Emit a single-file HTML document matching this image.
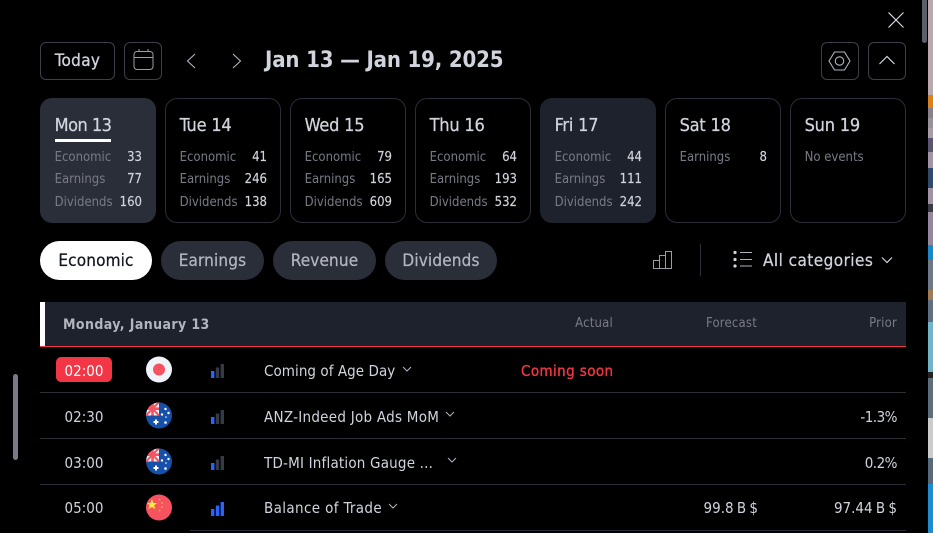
<!DOCTYPE html>
<html><head><meta charset="utf-8">
<style>
html,body{margin:0;padding:0;background:#000;width:933px;height:533px;overflow:hidden}
body{position:relative;font-family:"DejaVu Sans Condensed","Liberation Sans",sans-serif;font-stretch:condensed}
.a{position:absolute;white-space:nowrap}
.btn{position:absolute;top:42px;height:36px;border:1px solid #3d404a;border-radius:6px}
.card{position:absolute;top:98px;width:114px;height:123px;border:1px solid #2a2e39;border-radius:12px}
.card .t{position:absolute;left:13.6px;top:16px;font-size:18px;line-height:22px;color:#d1d4dc;white-space:nowrap;letter-spacing:-.2px;-webkit-text-stroke:.25px #d1d4dc}
.card .l{position:absolute;left:13.6px;margin-top:1px;font-size:13px;line-height:16px;color:#787b86;white-space:nowrap}
.card .n{position:absolute;right:13px;margin-top:1px;font-size:13px;line-height:16px;color:#d1d4dc;white-space:nowrap;-webkit-text-stroke:.15px #d1d4dc}
.pill{position:absolute;top:241px;height:39px;border-radius:20px;background:#2a2e39;color:#b2b5be;font-size:17px;line-height:40px;text-align:center;letter-spacing:.15px;-webkit-text-stroke:.25px currentColor}
.sep{position:absolute;height:1px;background:#2a2e39;left:40px;width:866px}
.time{position:absolute;left:56px;width:56px;text-align:center;font-size:15px;line-height:20px;color:#d1d4dc}
.ev{position:absolute;left:264px;font-size:15px;line-height:20px;color:#d1d4dc;white-space:nowrap}
.val{position:absolute;font-size:15px;line-height:20px;color:#d1d4dc;white-space:nowrap;text-align:right;letter-spacing:-.5px}
.h{position:absolute;top:316px;font-size:13px;line-height:16px;color:#787b86;text-align:right;white-space:nowrap;letter-spacing:.2px}
svg{position:absolute;display:block}
.s{position:absolute;left:928px;width:5px}
</style></head>
<body>
<!-- right wallpaper strip -->
<div class="s" style="top:0;height:95px;background:#b9a8ae"></div>
<div class="s" style="top:95px;height:13px;background:#d9801f"></div>
<div class="s" style="top:108px;height:10px;background:#8a7f8c"></div>
<div class="s" style="top:118px;height:10px;background:#9a9098"></div>
<div class="s" style="top:128px;height:10px;background:#a89ca8"></div>
<div class="s" style="top:138px;height:14px;background:#5a5470"></div>
<div class="s" style="top:152px;height:16px;background:#a294a4"></div>
<div class="s" style="top:168px;height:20px;background:#2f4a6a"></div>
<div class="s" style="top:188px;height:16px;background:#a094a4"></div>
<div class="s" style="top:204px;height:8px;background:#3a3a44"></div>
<div class="s" style="top:212px;height:33px;background:#96889c"></div>
<div class="s" style="top:245px;height:15px;background:#1c88c8"></div>
<div class="s" style="top:260px;height:30px;background:#6f7886"></div>
<div class="s" style="top:290px;height:10px;background:#a07a50"></div>
<div class="s" style="top:300px;height:22px;background:#5f6e80"></div>
<div class="s" style="top:322px;height:50px;background:#6fb4c8"></div>
<div class="s" style="top:372px;height:6px;background:#222"></div>
<div class="s" style="top:378px;height:40px;background:#5f6d7a"></div>
<div class="s" style="top:418px;height:40px;background:#c9cbcd"></div>
<div class="s" style="top:458px;height:26px;background:#58697a"></div>
<div class="s" style="top:484px;height:49px;background:#1f8cd0"></div>

<!-- scrollbars -->
<div class="a" style="left:922px;top:-4px;width:5px;height:47px;background:#5d5f68;border-radius:3px"></div>
<div class="a" style="left:13px;top:374px;width:5px;height:86px;background:#787b86;border-radius:3px"></div>

<!-- close -->
<svg style="left:887px;top:11px" width="18" height="18" viewBox="0 0 18 18"><path d="M1.5 1.5L16.5 16.5M16.5 1.5L1.5 16.5" stroke="#d1d4dc" stroke-width="1.2" fill="none"/></svg>

<!-- top bar -->
<div class="btn" style="left:40px;width:73px;color:#d1d4dc;font-size:17px;line-height:36px;text-align:center;letter-spacing:.3px;-webkit-text-stroke:.3px #d1d4dc">Today</div>
<div class="btn" style="left:124px;width:36px"></div>
<svg style="left:133px;top:48px" width="22" height="24" viewBox="0 0 22 24" fill="none" stroke="#9a9da6" stroke-width="1"><rect x="1" y="3.5" width="19" height="18" rx="3"/><path d="M1 9.5H20M6 1V3.5M15 1V3.5"/></svg>
<svg style="left:185px;top:52px" width="12" height="18" viewBox="0 0 12 18" fill="none" stroke="#b2b5be" stroke-width="1.1"><path d="M10 2L2.5 9L10 16"/></svg>
<svg style="left:231px;top:52px" width="12" height="18" viewBox="0 0 12 18" fill="none" stroke="#b2b5be" stroke-width="1.1"><path d="M2 2L9.5 9L2 16"/></svg>
<div class="a" style="left:265px;top:47px;font-size:22px;line-height:28px;font-weight:bold;color:#d1d4dc;letter-spacing:-.15px">Jan 13 — Jan 19, 2025</div>
<div class="btn" style="left:821px;width:36px"></div>
<svg style="left:827px;top:49px" width="25" height="24" viewBox="0 0 25 24" fill="none" stroke="#b2b5be" stroke-width="1.1"><path d="M7.5 3H17.5L23 12L17.5 21H7.5L2 12Z"/><circle cx="12.5" cy="12" r="4.2"/></svg>
<div class="btn" style="left:868px;width:36px"></div>
<svg style="left:878px;top:53px" width="18" height="14" viewBox="0 0 18 14" fill="none" stroke="#d1d4dc" stroke-width="1.2"><path d="M1.5 11L9 3.5L16.5 11"/></svg>

<!-- cards -->
<div class="card" style="left:40px;background:#2a2e39;border-color:#2a2e39"><div class="t" style="letter-spacing:-.5px">Mon 13</div>
<div class="a" style="left:14px;top:40px;width:56px;height:3px;background:#fff"></div>
<div class="l" style="top:50px">Economic</div><div class="n" style="top:50px">33</div>
<div class="l" style="top:72px">Earnings</div><div class="n" style="top:72px">77</div>
<div class="l" style="top:95px">Dividends</div><div class="n" style="top:95px">160</div></div>

<div class="card" style="left:165px"><div class="t">Tue 14</div>
<div class="l" style="top:50px">Economic</div><div class="n" style="top:50px">41</div>
<div class="l" style="top:72px">Earnings</div><div class="n" style="top:72px">246</div>
<div class="l" style="top:95px">Dividends</div><div class="n" style="top:95px">138</div></div>

<div class="card" style="left:290px"><div class="t">Wed 15</div>
<div class="l" style="top:50px">Economic</div><div class="n" style="top:50px">79</div>
<div class="l" style="top:72px">Earnings</div><div class="n" style="top:72px">165</div>
<div class="l" style="top:95px">Dividends</div><div class="n" style="top:95px">609</div></div>

<div class="card" style="left:415px"><div class="t">Thu 16</div>
<div class="l" style="top:50px">Economic</div><div class="n" style="top:50px">64</div>
<div class="l" style="top:72px">Earnings</div><div class="n" style="top:72px">193</div>
<div class="l" style="top:95px">Dividends</div><div class="n" style="top:95px">532</div></div>

<div class="card" style="left:540px;background:#1e222d;border-color:#1e222d"><div class="t">Fri 17</div>
<div class="l" style="top:50px">Economic</div><div class="n" style="top:50px">44</div>
<div class="l" style="top:72px">Earnings</div><div class="n" style="top:72px">111</div>
<div class="l" style="top:95px">Dividends</div><div class="n" style="top:95px">242</div></div>

<div class="card" style="left:665px"><div class="t">Sat 18</div>
<div class="l" style="top:50px">Earnings</div><div class="n" style="top:50px">8</div></div>

<div class="card" style="left:790px"><div class="t">Sun 19</div>
<div class="l" style="top:50px">No events</div></div>

<!-- pills -->
<div class="pill" style="left:40px;width:112px;background:#fff;color:#131722">Economic</div>
<div class="pill" style="left:161px;width:103px">Earnings</div>
<div class="pill" style="left:273px;width:103px">Revenue</div>
<div class="pill" style="left:385px;width:112px">Dividends</div>

<svg style="left:652px;top:250px" width="21" height="20" viewBox="0 0 21 20" fill="none" stroke="#9a9da6" stroke-width="1"><path d="M1.5 18.5V10.5H7.5V18.5ZM7.5 18.5V5.5H13.5V18.5ZM13.5 18.5V1.5H19.5V18.5Z"/></svg>
<div class="a" style="left:700px;top:244px;width:1px;height:32px;background:#2f323b"></div>
<svg style="left:733px;top:250px" width="20" height="20" viewBox="0 0 20 20"><circle cx="2" cy="2.5" r="1.6" fill="#d1d4dc"/><circle cx="2" cy="9.5" r="1.6" fill="#d1d4dc"/><circle cx="2" cy="16" r="1.6" fill="#d1d4dc"/><path d="M7 2.5H19M7 9.5H19M7 16H19" stroke="#b2b5be" stroke-width="1.1"/></svg>
<div class="a" style="left:763px;top:250px;font-size:17px;line-height:22px;color:#d1d4dc;letter-spacing:.45px;-webkit-text-stroke:.25px #d1d4dc">All categories</div>
<svg style="left:881px;top:256px" width="12" height="8" viewBox="0 0 12 8" fill="none" stroke="#d1d4dc" stroke-width="1.2"><path d="M1 1.5L6 6.5L11 1.5"/></svg>

<!-- table header -->
<div class="a" style="left:40px;top:302px;width:866px;height:44px;background:#1e222d"></div>
<div class="a" style="left:40px;top:302px;width:5px;height:44px;background:#fff"></div>
<div class="a" style="left:40px;top:346px;width:866px;height:1px;background:#f23645"></div>
<div class="a" style="left:63px;top:316px;font-size:14px;line-height:18px;font-weight:bold;color:#b2b5be;letter-spacing:.4px">Monday, January 13</div>
<div class="h" style="right:320px">Actual</div>
<div class="h" style="right:176px">Forecast</div>
<div class="h" style="right:36px">Prior</div>

<!-- separators -->
<div class="sep" style="top:392px"></div>
<div class="sep" style="top:438px"></div>
<div class="sep" style="top:484px"></div>
<div class="sep" style="top:530px;left:190px;width:716px"></div>

<!-- row 1 -->
<div class="a" style="left:56px;top:357px;width:56px;height:25px;background:#f23645;border-radius:5px"></div>
<div class="time" style="top:361px;color:#fff">02:00</div>
<svg style="left:146px;top:356px" width="26" height="27" viewBox="0 0 26 27"><circle cx="13" cy="13.5" r="13" fill="#f0f3fa"/><circle cx="13" cy="13.5" r="6" fill="#f7525f"/></svg>
<svg style="left:211px;top:364px" width="13" height="14" viewBox="0 0 13 14"><rect x="0" y="7" width="3.4" height="7" fill="#2962ff"/><rect x="4.8" y="3.5" width="3.4" height="10.5" fill="#363a45"/><rect x="9.6" y="0" width="3.4" height="14" fill="#363a45"/></svg>
<div class="ev" style="top:361px;letter-spacing:.06px">Coming of Age Day</div>
<svg style="left:402px;top:366px" width="10" height="7" viewBox="0 0 10 7" fill="none" stroke="#b2b5be"><path d="M1 1L5 5L9 1"/></svg>
<div class="a" style="left:521px;top:361px;font-size:15px;line-height:20px;color:#f23645;letter-spacing:.4px;-webkit-text-stroke:.35px #f23645">Coming soon</div>

<!-- row 2 -->
<div class="time" style="top:407px">02:30</div>
<svg style="left:146px;top:402px" width="26" height="27" viewBox="0 0 26 27"><defs><clipPath id="c"><circle cx="13" cy="13.5" r="13"/></clipPath></defs><g clip-path="url(#c)"><rect width="26" height="27" fill="#1650a8"/><rect width="13" height="13.5" fill="#f0f3fa"/><path d="M0 0L13 13.5M13 0L0 13.5" stroke="#f7525f" stroke-width="2"/><path d="M6.5 0V13.5M0 6.7H13" stroke="#f7525f" stroke-width="2.6"/><path d="M7.5 20h5M10 17.5v5" stroke="#fff" stroke-width="2"/><g fill="#fff"><circle cx="19.5" cy="7" r="1.2"/><circle cx="22.5" cy="11" r="1.2"/><circle cx="16" cy="12.5" r="1.2"/><circle cx="19.5" cy="20.5" r="1.3"/><circle cx="20" cy="15" r=".8"/></g></g></svg>
<svg style="left:211px;top:410px" width="13" height="14" viewBox="0 0 13 14"><rect x="0" y="7" width="3.4" height="7" fill="#2962ff"/><rect x="4.8" y="3.5" width="3.4" height="10.5" fill="#363a45"/><rect x="9.6" y="0" width="3.4" height="14" fill="#363a45"/></svg>
<div class="ev" style="top:407px;letter-spacing:.27px">ANZ-Indeed Job Ads MoM</div>
<svg style="left:445px;top:411px" width="10" height="7" viewBox="0 0 10 7" fill="none" stroke="#b2b5be"><path d="M1 1L5 5L9 1"/></svg>
<div class="val" style="top:407px;right:36px">-1.3%</div>

<!-- row 3 -->
<div class="time" style="top:453px">03:00</div>
<svg style="left:146px;top:448px" width="26" height="27" viewBox="0 0 26 27"><defs><clipPath id="c2"><circle cx="13" cy="13.5" r="13"/></clipPath></defs><g clip-path="url(#c2)"><rect width="26" height="27" fill="#1650a8"/><rect width="13" height="13.5" fill="#f0f3fa"/><path d="M0 0L13 13.5M13 0L0 13.5" stroke="#f7525f" stroke-width="2"/><path d="M6.5 0V13.5M0 6.7H13" stroke="#f7525f" stroke-width="2.6"/><path d="M7.5 20h5M10 17.5v5" stroke="#fff" stroke-width="2"/><g fill="#fff"><circle cx="19.5" cy="7" r="1.2"/><circle cx="22.5" cy="11" r="1.2"/><circle cx="16" cy="12.5" r="1.2"/><circle cx="19.5" cy="20.5" r="1.3"/><circle cx="20" cy="15" r=".8"/></g></g></svg>
<svg style="left:211px;top:456px" width="13" height="14" viewBox="0 0 13 14"><rect x="0" y="7" width="3.4" height="7" fill="#2962ff"/><rect x="4.8" y="3.5" width="3.4" height="10.5" fill="#363a45"/><rect x="9.6" y="0" width="3.4" height="14" fill="#363a45"/></svg>
<div class="ev" style="top:453px;letter-spacing:.2px">TD-MI Inflation Gauge ...</div>
<svg style="left:447px;top:457px" width="10" height="7" viewBox="0 0 10 7" fill="none" stroke="#b2b5be"><path d="M1 1L5 5L9 1"/></svg>
<div class="val" style="top:453px;right:36px">0.2%</div>

<!-- row 4 -->
<div class="time" style="top:498px">05:00</div>
<svg style="left:146px;top:494px" width="26" height="27" viewBox="0 0 26 27"><circle cx="13" cy="13.5" r="13" fill="#f7525f"/><path d="M6 5.5L7.6 10H12L8.5 12.7L9.8 17L6 14.4L2.2 17L3.5 12.7L0.5 10H4.4Z" transform="translate(0.5,0) scale(.9)" fill="#ffeb3b"/><g fill="#f9b33c"><circle cx="13.5" cy="5.5" r=".9"/><circle cx="16" cy="9" r=".9"/><circle cx="16" cy="13" r=".9"/><circle cx="13.5" cy="16.5" r=".9"/></g></svg>
<svg style="left:211px;top:502px" width="13" height="14" viewBox="0 0 13 14"><rect x="0" y="7" width="3.4" height="7" fill="#2962ff"/><rect x="4.8" y="3.5" width="3.4" height="10.5" fill="#2962ff"/><rect x="9.6" y="0" width="3.4" height="14" fill="#2962ff"/></svg>
<div class="ev" style="top:498px;letter-spacing:.37px">Balance of Trade</div>
<svg style="left:388px;top:503px" width="10" height="7" viewBox="0 0 10 7" fill="none" stroke="#b2b5be"><path d="M1 1L5 5L9 1"/></svg>
<div class="val" style="top:498px;right:175px;letter-spacing:0;word-spacing:-1px">99.8 B $</div>
<div class="val" style="top:498px;right:36px;letter-spacing:0;word-spacing:-1px">97.44 B $</div>
</body></html>
